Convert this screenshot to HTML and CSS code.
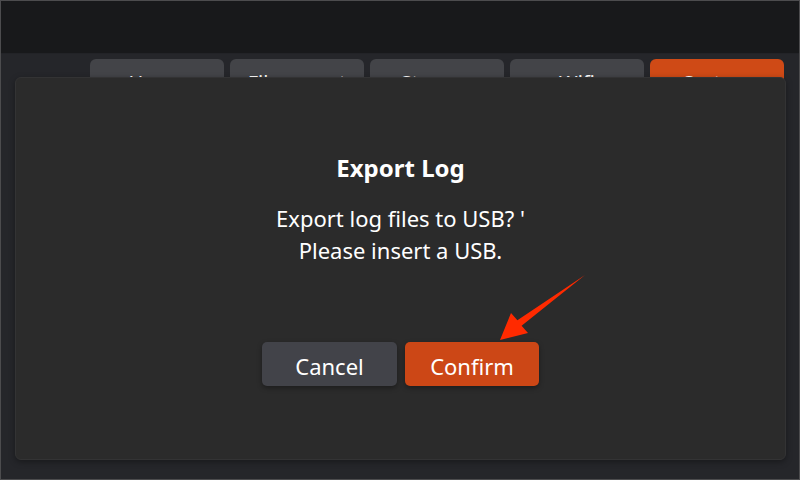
FILE: index.html
```html
<!DOCTYPE html>
<html>
<head>
<meta charset="utf-8">
<link rel="stylesheet" href="styles.css">
</head>
<body>
<div class="screen">
  <div class="topbar"></div>
  <div class="content">
    <div class="tabs">
      <div class="tab">Home</div>
      <div class="tab">File export</div>
      <div class="tab">Storage</div>
      <div class="tab">Wifi</div>
      <div class="tab active">System</div>
    </div>
  </div>
  <div class="dialog">
    <div class="title">Export Log</div>
    <div class="message">Export log files to USB? '<br>Please insert a USB.</div>
    <div class="actions">
      <button class="btn cancel">Cancel</button>
      <button class="btn confirm">Confirm</button>
    </div>
  </div>
  <svg class="arrow" width="800" height="480" viewBox="0 0 800 480">
    <polygon points="500,340 511,313 517.4,320.2 585,275 521.6,325.8 528,333" fill="#ff2a00"/>
  </svg>
</div>
</body>
</html>
```
FILE: styles.css
```css
* { box-sizing: border-box; }
html, body { margin: 0; padding: 0; }
body { width: 800px; height: 480px; overflow: hidden; font-family: "Noto Sans", "Open Sans", sans-serif; }
.screen {
  position: relative;
  width: 800px; height: 480px;
  border: 1px solid #4c4c4e;
  background: #25262a;
  display: flex; flex-direction: column;
}
.topbar { height: 53px; background: #18191b; border-bottom: 1px solid #222327; }
.content { flex: 1; }
.tabs { display: flex; gap: 6px; padding: 5px 0 0 89px; }
.tab {
  width: 134px; height: 52px;
  background: #434448;
  border-radius: 6px;
  color: #fff; font-size: 20px; line-height: 24px;
  display: flex; justify-content: center; padding-top: 12px;
}
.tab.active { background: #cf4a16; }
.dialog {
  position: absolute;
  left: 14px; top: 76px;
  width: 771px; height: 383px;
  background: #2b2b2b;
  border: 1px solid #333334;
  border-radius: 6px;
  box-shadow: 0 2px 6px rgba(0,0,0,0.35);
  display: flex; flex-direction: column; align-items: center;
  color: #fff;
  padding-top: 74px;
}
.title { font-size: 24px; font-weight: 700; line-height: 32px; }
.message { font-size: 22px; line-height: 32px; text-align: center; margin-top: 18px; }
.actions { display: flex; gap: 8px; margin-top: 76px; }
.btn {
  height: 44px; border: none; border-radius: 5px;
  font-family: inherit; font-size: 22px; color: #fff;
  padding: 3px 0 0;
  box-shadow: 0 2px 5px rgba(0,0,0,0.35);
}
.cancel { width: 135px; background: #424349; }
.confirm { width: 134px; background: #cc4716; }
.arrow { position: absolute; left: -1px; top: -1px; pointer-events: none; }
```
